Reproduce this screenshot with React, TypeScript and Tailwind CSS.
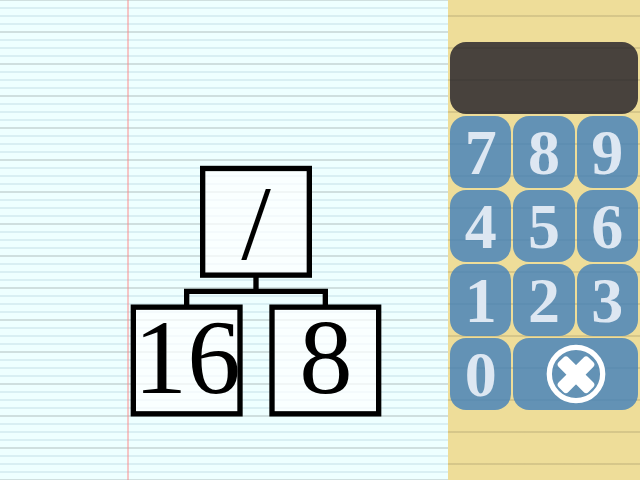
import React from "react";

const KEYS = ["7", "8", "9", "4", "5", "6", "1", "2", "3", "0"];

function TreeNode({ x, y, label, tx, ty }: { x: number; y: number; label: string; tx: number; ty: number }) {
  return (
    <g>
      <rect
        x={x + 2.667}
        y={y + 2.667}
        width={106.667}
        height={106.667}
        fill="rgba(255,255,255,0.7)"
        stroke="#000"
        strokeWidth={5.333}
      />
      <text x={tx} y={ty} textAnchor="middle" className="text-[106.667px]">
        {label}
      </text>
    </g>
  );
}

function ExpressionTree() {
  return (
    <svg width="448" height="480" viewBox="0 0 448 480" className="block font-['Liberation_Serif',serif]">
      <path
        d="M256 277V291.333M186.667 306V291.333H325.333V306"
        fill="none"
        stroke="#000"
        strokeWidth={5.333}
      />
      <TreeNode x={200} y={165.8} label="/" tx={256} ty={259} />
      <TreeNode x={130.667} y={304.5} label="16" tx={187.2} ty={393} />
      <TreeNode x={269.333} y={304.5} label="8" tx={325.9} ty={393} />
    </svg>
  );
}

function CancelIcon() {
  return (
    <svg width="60" height="60" viewBox="-30 -30 60 60" fill="#fff">
      <circle r="26.7" fill="none" stroke="#fff" strokeWidth="5.3" />
      <g transform="translate(0 0.7)">
        <rect x="-21.1" y="-6.8" width="42.2" height="13.6" rx="3.5" transform="rotate(45)" />
        <rect x="-21.1" y="-6.8" width="42.2" height="13.6" rx="3.5" transform="rotate(-45)" />
      </g>
    </svg>
  );
}

export default function App() {
  return (
    <div className="flex h-[480px] w-[640px] overflow-hidden font-['Liberation_Serif',serif]">
      <main className="w-[448px] bg-[#eeffff] bg-[linear-gradient(90deg,transparent_127px,rgba(255,128,128,0.45)_127px,rgba(255,128,128,0.45)_129px,transparent_129px),repeating-linear-gradient(180deg,#cfdfdf_0px,#cfdfdf_1px,#eeffff_1px,#eeffff_7px,#d9eff3_7px,#d9eff3_9px,#eeffff_9px,#eeffff_15px,#d9eff3_15px,#d9eff3_17px,#eeffff_17px,#eeffff_23px,#d9eff3_23px,#d9eff3_25px,#eeffff_25px,#eeffff_31px,#cfdfdf_31px,#cfdfdf_32px)]">
        <ExpressionTree />
      </main>
      <aside className="w-[192px] bg-[#eedd99] bg-[repeating-linear-gradient(180deg,transparent_0px,transparent_15px,rgba(0,0,0,0.1)_15px,rgba(0,0,0,0.1)_17px,transparent_17px,transparent_32px)] px-[2px] pt-[42px]">
        <div className="h-[72px] rounded-[16px] bg-[#1e1b25]/80" />
        <div className="mt-[2px] grid auto-rows-[72px] grid-cols-3 gap-[2px]">
          {KEYS.map((k) => (
            <button
              key={k}
              className="flex items-center justify-center rounded-[16px] bg-[#4080bb]/80 pt-[2px] text-[64px] leading-[70px] font-bold text-[#dde7f2]"
            >
              {k}
            </button>
          ))}
          <button className="col-span-2 flex items-center justify-center rounded-[16px] bg-[#4080bb]/80">
            <CancelIcon />
          </button>
        </div>
      </aside>
    </div>
  );
}
